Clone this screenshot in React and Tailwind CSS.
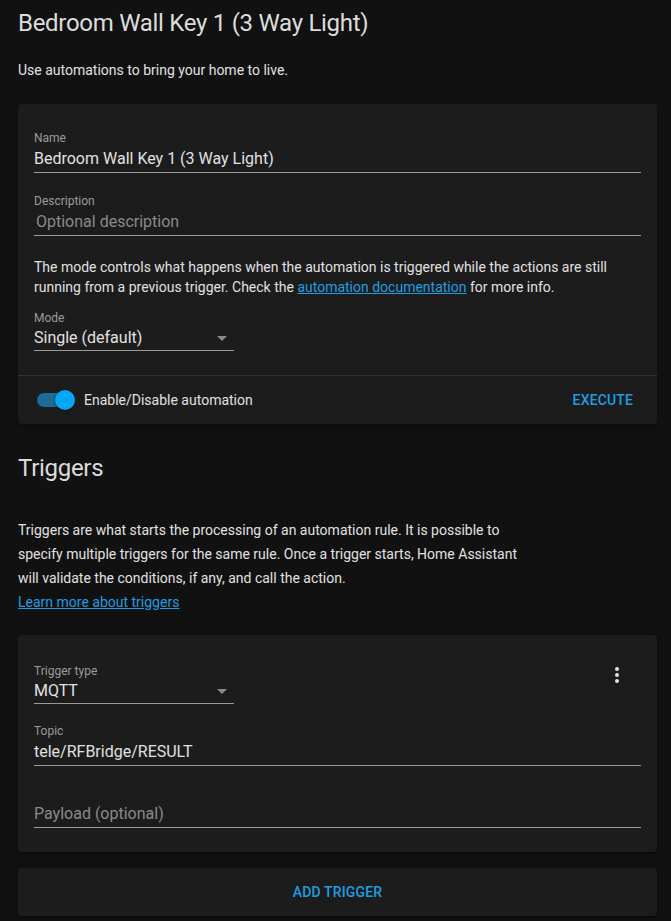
const cardShadow =
  'rounded-[4px] bg-[#1c1c1c] shadow-[0_2px_2px_0_rgba(0,0,0,0.14),0_1px_5px_0_rgba(0,0,0,0.12),0_3px_1px_-2px_rgba(0,0,0,0.2)]'

function TextField({ label, value, placeholder, inset = false, className = '' }) {
  return (
    <div className={className}>
      <div className="h-4 text-[12px] leading-4 text-[#9b9b9b]">{label}</div>
      <div className="mt-[3px] border-b border-[#9a9a9a] pb-[3px] text-[16px] leading-5">
        {value ? (
          <span className="text-[#e1e1e1]">{value}</span>
        ) : (
          <span className={inset ? 'pl-[2px] text-[#8a8a8a]' : 'text-[#8a8a8a]'}>{placeholder}</span>
        )}
      </div>
    </div>
  )
}

function SelectField({ label, value, className = '' }) {
  return (
    <div className={`w-[200px] ${className}`}>
      <div className="text-[12px] leading-4 text-[#9b9b9b]">{label}</div>
      <div className="mt-[2px] flex items-center justify-between border-b border-[#9a9a9a] pb-[2px] text-[16px] leading-5 text-[#e1e1e1]">
        <span>{value}</span>
        <svg width="10" height="5" viewBox="0 0 10 5" className="mr-[7px] mt-[1px]">
          <polygon points="0,0 10,0 5,5" fill="#8a8a8a" />
        </svg>
      </div>
    </div>
  )
}

function Toggle() {
  return (
    <div className="relative ml-[3px] h-[20px] w-[38px] shrink-0">
      <div className="absolute left-0 top-[3px] h-[14px] w-[34px] rounded-full bg-[#1d6c97]" />
      <div className="absolute right-0 top-0 h-[20px] w-[20px] rounded-full bg-[#03a9f4] shadow-[0_1px_3px_rgba(0,0,0,0.5)]" />
    </div>
  )
}

function DotsIcon() {
  return (
    <svg width="24" height="24" viewBox="0 0 24 24" fill="#e1e1e1">
      <path d="M12,16A2,2 0 0,1 14,18A2,2 0 0,1 12,20A2,2 0 0,1 10,18A2,2 0 0,1 12,16M12,10A2,2 0 0,1 14,12A2,2 0 0,1 12,14A2,2 0 0,1 10,12A2,2 0 0,1 12,10M12,4A2,2 0 0,1 14,6A2,2 0 0,1 12,8A2,2 0 0,1 10,6A2,2 0 0,1 12,4Z" />
    </svg>
  )
}

export default function App() {
  return (
    <div className="min-h-[921px] bg-[#111111] font-['Roboto',sans-serif] text-[#e1e1e1]">
      <div className="w-[657px] pb-[8px] pl-[18px]">
        <h1 className="pt-[7px] text-[24px] leading-8 tracking-[-0.012em] text-[#dcdcdc]">
          Bedroom Wall Key 1 (3 Way Light)
        </h1>
        <p className="mt-[21px] text-[14px] leading-5">Use automations to bring your home to live.</p>

        <div className={`mt-[24px] ${cardShadow}`}>
          <div className="px-4 pb-[24px] pt-[26px]">
            <TextField label="Name" value="Bedroom Wall Key 1 (3 Way Light)" />
            <TextField className="mt-[20px]" label="Description" placeholder="Optional description" inset />
            <p className="mt-[21px] text-[14px] leading-5">
              The mode controls what happens when the automation is triggered while the actions are still
              running from a previous trigger. Check the{' '}
              <a className="text-[#1c9fe2] underline">automation documentation</a> for more info.
            </p>
            <SelectField className="mt-[13px]" label="Mode" value="Single (default)" />
          </div>
          <div className="flex h-[49px] items-center justify-between border-t border-[#333333] pl-4 pr-6">
            <div className="flex items-center">
              <Toggle />
              <span className="ml-[9px] text-[14px]">Enable/Disable automation</span>
            </div>
            <button className="text-[14px] font-medium uppercase tracking-[0.01em] text-[#1c9fe2]">
              Execute
            </button>
          </div>
        </div>

        <h2 className="mt-[28px] text-[24px] leading-8 tracking-[-0.012em] text-[#dcdcdc]">Triggers</h2>
        <p className="mt-[34px] max-w-[510px] text-[14px] leading-6">
          Triggers are what starts the processing of an automation rule. It is possible to specify multiple
          triggers for the same rule. Once a trigger starts, Home Assistant will validate the conditions, if
          any, and call the action.
        </p>
        <a className="block text-[14px] leading-6 text-[#1c9fe2] underline">Learn more about triggers</a>

        <div className={`mt-[21px] px-4 pb-[24px] pt-4 ${cardShadow}`}>
          <div className="flex items-start justify-between">
            <SelectField className="mt-[12px]" label="Trigger type" value="MQTT" />
            <button className="flex h-12 w-12 items-center justify-center">
              <DotsIcon />
            </button>
          </div>
          <TextField className="mt-[19px]" label="Topic" value="tele/RFBridge/RESULT" />
          <TextField className="mt-[19px]" label="" placeholder="Payload (optional)" />
        </div>

        <div className={`mt-[16px] flex h-[48px] items-center justify-center ${cardShadow}`}>
          <button className="text-[14px] font-medium uppercase tracking-[0.01em] text-[#1c9fe2]">
            Add trigger
          </button>
        </div>
      </div>
    </div>
  )
}
